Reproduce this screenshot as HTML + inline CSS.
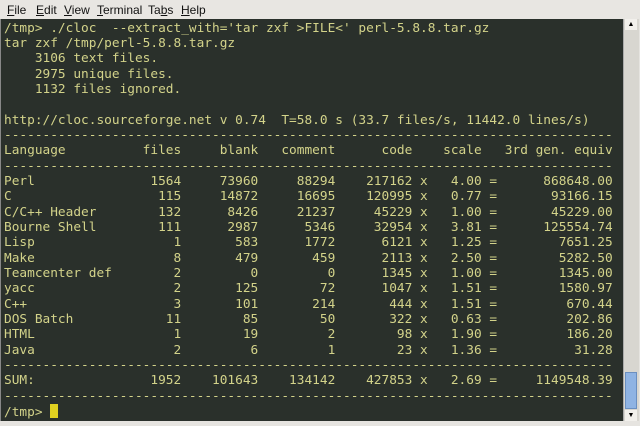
<!DOCTYPE html>
<html><head><meta charset="utf-8"><style>
body{margin:0;width:640px;height:426px;overflow:hidden;background:#e6e4e0;position:relative;font-family:"Liberation Sans",sans-serif}
.menu{position:absolute;top:0;left:0;width:640px;height:19px;background:#e8e6e2;font-size:12px;color:#111}
.menu span{position:absolute;top:3px}
.menu u{text-decoration:underline}
.term{position:absolute;top:19px;left:0;width:623px;height:402px;background:#2a302b;border-left:1px solid #888}
pre{margin:0;padding:1.5px 0 0 3px;font-family:"DejaVu Sans Mono","Liberation Mono",monospace;font-size:12.8px;line-height:15.35px;color:#d3d38a;white-space:pre}
.sb{position:absolute;top:19px;left:623px;width:15px;height:402px;background:#d8d6d0;border-left:1px solid #aaa}
.thumb{position:absolute;left:1px;top:353px;width:12px;height:37px;background:#8fb3e3;border:1px solid #6b8fc0;box-sizing:border-box}
.arr{position:absolute;left:1px;width:12px;height:11px;background:#f2f0ec;font-size:7px;text-align:center;line-height:11px;color:#000}
.cur{display:inline-block;width:7.5px;height:14px;background:#e0d020;vertical-align:-2px}
.bot{position:absolute;top:421px;left:0;width:640px;height:5px;background:#e6e4e0}
</style></head><body>
<div class="menu">
<span style="left:7px"><u>F</u>ile</span>
<span style="left:36px"><u>E</u>dit</span>
<span style="left:64px"><u>V</u>iew</span>
<span style="left:97px"><u>T</u>erminal</span>
<span style="left:148px">Ta<u>b</u>s</span>
<span style="left:181px"><u>H</u>elp</span>
</div>
<div class="term"><pre>/tmp&gt; ./cloc  --extract_with='tar zxf &gt;FILE&lt;' perl-5.8.8.tar.gz
tar zxf /tmp/perl-5.8.8.tar.gz
    3106 text files.
    2975 unique files.
    1132 files ignored.

http://cloc.sourceforge.net v 0.74  T=58.0 s (33.7 files/s, 11442.0 lines/s)
-------------------------------------------------------------------------------
Language          files     blank   comment      code    scale   3rd gen. equiv
-------------------------------------------------------------------------------
Perl               1564     73960     88294    217162 x   4.00 =      868648.00
C                   115     14872     16695    120995 x   0.77 =       93166.15
C/C++ Header        132      8426     21237     45229 x   1.00 =       45229.00
Bourne Shell        111      2987      5346     32954 x   3.81 =      125554.74
Lisp                  1       583      1772      6121 x   1.25 =        7651.25
Make                  8       479       459      2113 x   2.50 =        5282.50
Teamcenter def        2         0         0      1345 x   1.00 =        1345.00
yacc                  2       125        72      1047 x   1.51 =        1580.97
C++                   3       101       214       444 x   1.51 =         670.44
DOS Batch            11        85        50       322 x   0.63 =         202.86
HTML                  1        19         2        98 x   1.90 =         186.20
Java                  2         6         1        23 x   1.36 =          31.28
-------------------------------------------------------------------------------
SUM:               1952    101643    134142    427853 x   2.69 =     1149548.39
-------------------------------------------------------------------------------
/tmp&gt; <span class="cur"></span></pre></div>
<div class="sb">
<div class="arr" style="top:0">&#9650;</div>
<div class="thumb"></div>
<div class="arr" style="top:391px">&#9660;</div>
</div>
<div class="bot"></div>
</body></html>
